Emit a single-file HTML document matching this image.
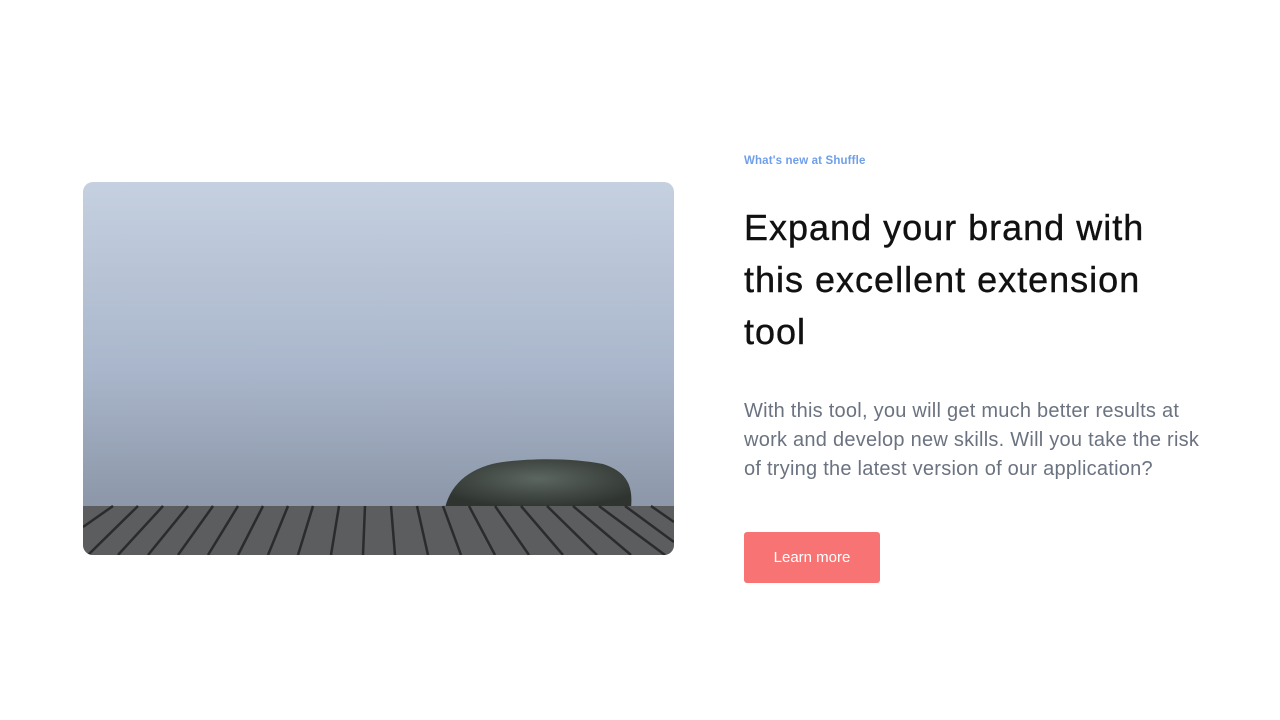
<!DOCTYPE html>
<html><head><meta charset="utf-8"><style>
body{margin:0;width:1280px;height:720px;background:#fff;font-family:"Liberation Sans",sans-serif;position:relative;overflow:hidden}
.img{position:absolute;left:83px;top:182px;width:591px;height:373px;border-radius:10px;overflow:hidden}
.tag{position:absolute;left:744px;top:155px;font-size:11.5px;font-weight:bold;color:#6f9fe9;letter-spacing:0.15px}
h1{position:absolute;left:744px;top:202px;margin:0;font-size:36px;line-height:52px;font-weight:normal;color:#111;letter-spacing:1px;-webkit-text-stroke:0.4px #111;white-space:nowrap}
p{position:absolute;left:744px;top:397px;margin:0;width:470px;font-size:20px;line-height:29px;color:#6b7280;letter-spacing:0.25px}
.btn{position:absolute;left:744px;top:532px;width:136px;height:51px;background:#f87474;border-radius:3px;color:#fff;font-size:15px;text-align:center;line-height:51px}
</style></head><body>
<div class="img">
<svg width="591" height="373" viewBox="0 0 591 373">
<defs>
<linearGradient id="sky" x1="0" y1="0" x2="0" y2="1">
<stop offset="0" stop-color="#c5d0e0"/><stop offset="0.5" stop-color="#aab6cb"/><stop offset="0.85" stop-color="#8d98aa"/><stop offset="1" stop-color="#8a95a6"/></linearGradient>
<radialGradient id="rock" cx="0.5" cy="0.4" r="0.6"><stop offset="0" stop-color="#5c6660"/><stop offset="1" stop-color="#2f3430"/></radialGradient>
</defs>
<rect width="591" height="373" fill="url(#sky)"/>
<path d="M362 326 C368 300 390 284 420 280 C450 276 490 276 520 282 C545 290 550 305 548 326 Z" fill="url(#rock)"/>
<rect y="324" width="591" height="49" fill="#5b5d5e"/>
<g stroke="#2a2b2c" stroke-width="2.5">
<line x1="30" y1="324" x2="0" y2="345"/>
<line x1="55" y1="324" x2="5" y2="373"/>
<line x1="80" y1="324" x2="35" y2="373"/>
<line x1="105" y1="324" x2="65" y2="373"/>
<line x1="130" y1="324" x2="95" y2="373"/>
<line x1="155" y1="324" x2="125" y2="373"/>
<line x1="180" y1="324" x2="155" y2="373"/>
<line x1="205" y1="324" x2="185" y2="373"/>
<line x1="230" y1="324" x2="215" y2="373"/>
<line x1="256" y1="324" x2="248" y2="373"/>
<line x1="282" y1="324" x2="280" y2="373"/>
<line x1="308" y1="324" x2="312" y2="373"/>
<line x1="334" y1="324" x2="345" y2="373"/>
<line x1="360" y1="324" x2="378" y2="373"/>
<line x1="386" y1="324" x2="412" y2="373"/>
<line x1="412" y1="324" x2="446" y2="373"/>
<line x1="438" y1="324" x2="480" y2="373"/>
<line x1="464" y1="324" x2="514" y2="373"/>
<line x1="490" y1="324" x2="548" y2="373"/>
<line x1="516" y1="324" x2="582" y2="373"/>
<line x1="542" y1="324" x2="591" y2="360"/>
<line x1="568" y1="324" x2="591" y2="340"/>
</g>
</svg>
</div>
<div class="tag">What's new at Shuffle</div>
<h1>Expand your brand with<br>this excellent extension<br>tool</h1>
<p>With this tool, you will get much better results at work and develop new skills. Will you take the risk of trying the latest version of our application?</p>
<div class="btn">Learn more</div>
</body></html>
